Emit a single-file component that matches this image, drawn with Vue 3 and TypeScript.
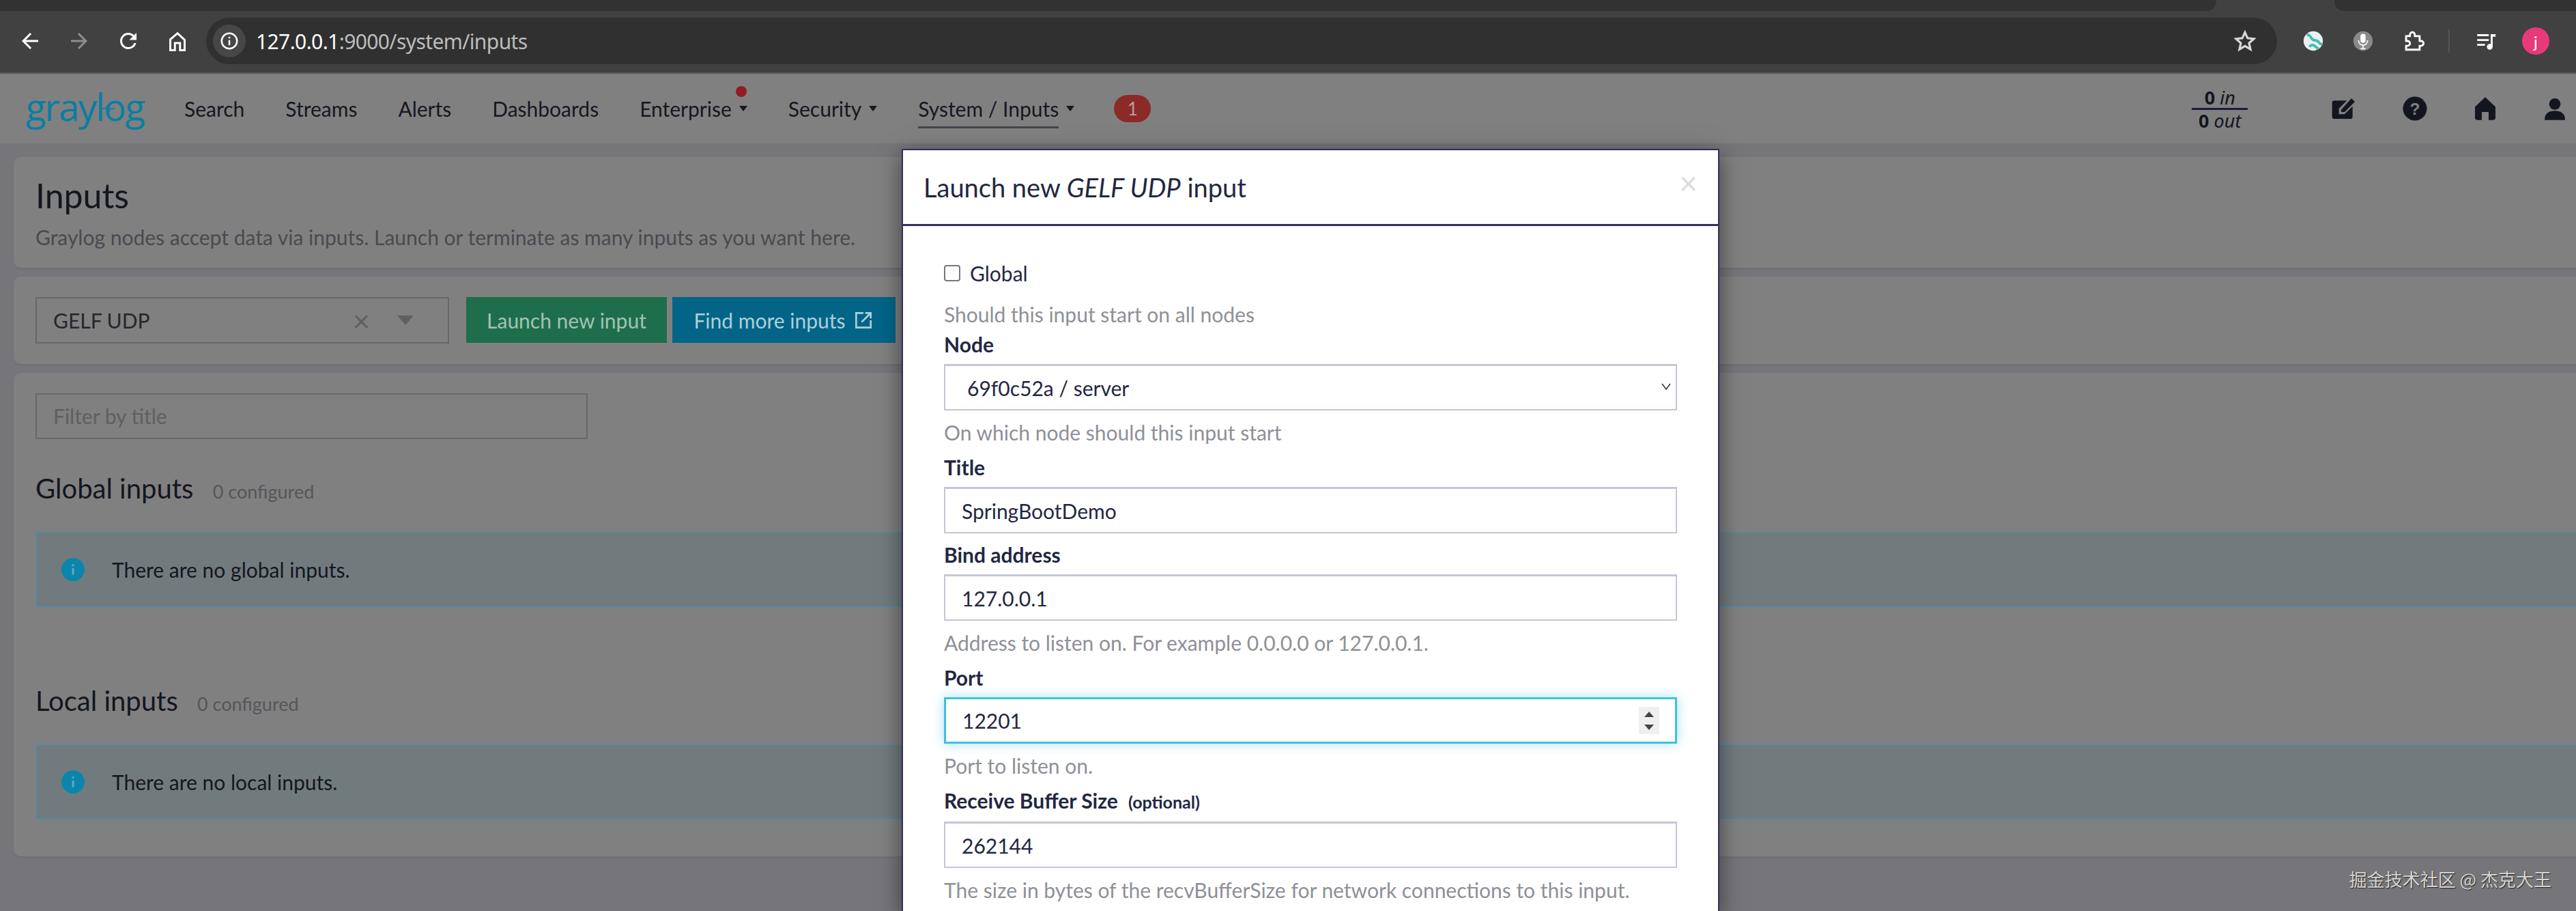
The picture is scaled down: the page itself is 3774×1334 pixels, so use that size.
<template>
  <div class="browser">
    <div class="tabstrip">
      <div class="tab-left" />
      <div class="tab-right" />
    </div>

    <div class="toolbar">
      <svg class="tb-icon" viewBox="0 0 24 24" fill="#fff"><path d="M20 11H7.8l5.6-5.6L12 4l-8 8 8 8 1.4-1.4L7.8 13H20z" /></svg>
      <svg class="tb-icon" viewBox="0 0 24 24" fill="#8e8e8e"><path d="M4 11h12.2l-5.6-5.6L12 4l8 8-8 8-1.4-1.4 5.6-5.6H4z" /></svg>
      <svg class="tb-icon" viewBox="0 0 24 24" fill="#fff"><path d="M17.65 6.35A8 8 0 1 0 19.73 14h-2.08A6 6 0 1 1 12 6c1.66 0 3.14.69 4.22 1.78L13 11h7V4z" /></svg>
      <svg class="tb-icon" viewBox="0 0 24 24" fill="none" stroke="#fff" stroke-width="2"><path d="M5 21V10.5L12 4.5l7 6.5V21h-4.5v-7h-5v7z" /></svg>

      <div class="omnibox">
        <span class="site-info">
          <svg viewBox="0 0 24 24" width="30" height="30" fill="none" stroke="#fff" stroke-width="2"><circle cx="12" cy="12" r="9" /><path d="M12 11v6M12 7v2" /></svg>
        </span>
        <span class="url"><b>127.0.0.1</b>:9000/system/inputs</span>
        <svg class="star" viewBox="0 0 24 24" fill="none" stroke="#d8d8d8" stroke-width="2"><path d="M12 4l2.4 5.4 5.8.6-4.4 3.9 1.3 5.8L12 16.7 6.900 19.700l1.300-5.800L3.800 10l5.800-.6z" /></svg>
      </div>

      <div class="extensions">
        <svg class="ext" viewBox="0 0 36 36"><circle cx="18" cy="18" r="15" fill="#eceff0" /><path d="M8 8c8 0 5 9 13 9s5 8 11 5M12 27c5-6 8-1 14 3" fill="none" stroke="#3dbdb5" stroke-width="4" /></svg>
        <svg class="ext" viewBox="0 0 36 36"><circle cx="18" cy="18" r="15" fill="#8a8a8a" /><rect x="14" y="7" width="8" height="14" rx="4" fill="#fff" /><path d="M11 17c0 10 14 10 14 0M18 24v6M14 30h8" fill="none" stroke="#fff" stroke-width="1.800" /></svg>
        <svg class="ext" viewBox="0 0 24 24" fill="none" stroke="#fff" stroke-width="2"><path d="M5 7h4V5.500a2.500 2.500 0 0 1 5 0V7h5v5h1.500a2.500 2.500 0 0 1 0 5H19v4H5v-4h1.500a2.500 2.500 0 0 0 0-5H5z" /></svg>
        <span class="tb-divider" />
        <svg class="ext queue" viewBox="0 0 24 24" fill="#fff"><path d="M3 5h12v2H3zM3 10h12v2H3zM3 15h8v2H3zM17 5h5v2.500h-3V18a3 3 0 1 1-2-2.800z" /></svg>
        <span class="avatar">j</span>
      </div>
    </div>

    <div class="viewport">
      <div class="page">
        <nav class="navbar">
          <div class="logo">
            graylog
            <svg class="logo-pulse" viewBox="0 0 20 12" fill="none" stroke="#0a7ea3" stroke-width="1.500"><path d="M1 6h5l2-4 3 8 2-4h6" /></svg>
          </div>
          <ul class="nav-items">
            <li v-for="item in navItems" :key="item.label" class="nav-item">
              <span :class="{ current: item.current }">{{ item.label }}</span>
              <i v-if="item.caret" class="caret" />
              <i v-if="item.dot" class="dot" />
            </li>
          </ul>
          <span class="badge">1</span>
          <div class="throughput">
            <div><b>0</b> <em>in</em></div>
            <div class="out"><b>0</b> <em>out</em></div>
          </div>
          <div class="nav-icons">
            <svg viewBox="0 0 24 24" width="40" height="40" fill="#14161f"><path d="M3 5h11l-7 7v5h5l7-7v9a2 2 0 0 1-2 2H3a2 2 0 0 1-2-2V7a2 2 0 0 1 2-2zM9 13l9-10 3 3-9 9H9z" /></svg>
            <svg viewBox="0 0 24 24" width="42" height="42"><circle cx="12" cy="12" r="10" fill="#14161f" /><text x="12" y="17" text-anchor="middle" font-size="14" font-weight="700" font-family="Liberation Sans, sans-serif" fill="#808080">?</text></svg>
            <svg viewBox="0 0 24 24" width="40" height="40" fill="#14161f"><path d="M12 2l9 8.500V20a2 2 0 0 1-2 2h-4v-7H9v7H5a2 2 0 0 1-2-2v-9.500z" /></svg>
            <svg viewBox="0 0 24 24" width="40" height="40" fill="#14161f"><circle cx="12" cy="8" r="5" /><path d="M3 22c0-6 4-8 9-8s9 2 9 8z" /></svg>
          </div>
        </nav>

        <section class="panel head-panel">
          <h1>Inputs</h1>
          <p class="lead">Graylog nodes accept data via inputs. Launch or terminate as many inputs as you want here.</p>
        </section>

        <section class="panel action-panel">
          <div class="type-select">
            <span>GELF UDP</span>
            <span class="clear">×</span>
            <i class="select-caret" />
          </div>
          <button class="btn btn-green">Launch new input</button>
          <button class="btn btn-blue">
            Find more inputs
            <svg viewBox="0 0 24 24" width="32" height="32" fill="none" stroke="currentColor" stroke-width="2"><path d="M12 4H4v16h16v-8M10 14L20 4M14 4h6v6" /></svg>
          </button>
        </section>

        <section class="panel list-panel">
          <div class="filter">Filter by title</div>
          <template v-for="block in inputBlocks" :key="block.title">
            <h2>{{ block.title }} <small>0 configured</small></h2>
            <div class="alert">
              <svg viewBox="0 0 24 24" width="34" height="34"><circle cx="12" cy="12" r="12" fill="#0a86ad" /><path d="M12 10.500v7M12 6.500v2" stroke="#6fa6b8" stroke-width="2" /></svg>
              <span>{{ block.empty }}</span>
            </div>
          </template>
        </section>
      </div>

      <div class="modal">
        <header class="modal-header">
          <h3>Launch new <em>GELF UDP</em> input</h3>
          <span class="close">×</span>
        </header>
        <div class="modal-body">
          <label class="check-row"><input type="checkbox" /> Global</label>
          <p class="help first">Should this input start on all nodes</p>

          <div class="field">
            <label>Node</label>
            <div class="control">
              <select><option>69f0c52a / server</option></select>
              <svg class="chevron" viewBox="0 0 16 12" fill="none" stroke="#333" stroke-width="1.500"><path d="M2 2l6 8 6-8" /></svg>
            </div>
            <p class="help">On which node should this input start</p>
          </div>

          <div class="field">
            <label>Title</label>
            <div class="control"><input type="text" value="SpringBootDemo" /></div>
          </div>

          <div class="field">
            <label>Bind address</label>
            <div class="control"><input type="text" value="127.0.0.1" /></div>
            <p class="help">Address to listen on. For example 0.0.0.0 or 127.0.0.1.</p>
          </div>

          <div class="field">
            <label>Port</label>
            <div class="control focused">
              <input type="text" value="12201" />
              <span class="spinner"><i class="up" /><i class="down" /></span>
            </div>
            <p class="help">Port to listen on.</p>
          </div>

          <div class="field">
            <label>Receive Buffer Size <small>(optional)</small></label>
            <div class="control"><input type="text" value="262144" /></div>
            <p class="help">The size in bytes of the recvBufferSize for network connections to this input.</p>
          </div>
        </div>
      </div>

      <div class="watermark">掘金技术社区 @ 杰克大王</div>
    </div>
  </div>
</template>

<script setup lang="ts">
interface NavItem {
  label: string
  caret?: boolean
  dot?: boolean
  current?: boolean
}

const navItems: NavItem[] = [
  { label: 'Search' },
  { label: 'Streams' },
  { label: 'Alerts' },
  { label: 'Dashboards' },
  { label: 'Enterprise', caret: true, dot: true },
  { label: 'Security', caret: true },
  { label: 'System / Inputs', caret: true, current: true },
]

const inputBlocks = [
  { title: 'Global inputs', empty: 'There are no global inputs.' },
  { title: 'Local inputs', empty: 'There are no local inputs.' },
]
</script>

<style>
html, body {
  margin: 0;
  background: #76767a;
}
</style>

<style scoped>
.browser {
  width: 3774px;
  height: 1334px;
  overflow: hidden;
  font-family: Lato, "Noto Sans", sans-serif;
  display: flex;
  flex-direction: column;
}

.tabstrip {
  height: 16px;
  background: #414141;
  display: flex;
  justify-content: space-between;
}
.tab-left {
  width: 3247px;
  background: #323232;
  border-radius: 0 0 14px 0;
}
.tab-right {
  width: 354px;
  background: #323232;
  border-radius: 0 0 0 14px;
}

.toolbar {
  height: 92px;
  background: #414141;
  border-bottom: 2px solid #5a5a5a;
  box-sizing: border-box;
  display: flex;
  align-items: center;
  padding: 0 0 2px 26px;
  flex-shrink: 0;
}
.tb-icon {
  width: 36px;
  height: 36px;
  margin-right: 36px;
}
.omnibox {
  width: 3034px;
  height: 68px;
  margin-left: -12px;
  border-radius: 34px;
  background: #303030;
  display: flex;
  align-items: center;
  padding-left: 10px;
  box-sizing: border-box;
}
.site-info {
  width: 48px;
  height: 48px;
  border-radius: 50%;
  background: #474747;
  display: flex;
  align-items: center;
  justify-content: center;
}
.url {
  margin-left: 15px;
  font: 30px "Noto Sans", sans-serif;
  letter-spacing: -0.6px;
  color: #bdbdbd;
}
.url b {
  font-weight: 400;
  color: #fff;
}
.star {
  width: 38px;
  height: 38px;
  margin-left: auto;
  margin-right: 28px;
}
.extensions {
  display: flex;
  align-items: center;
  margin-left: 36px;
}
.ext {
  width: 34px;
  height: 34px;
  margin-right: 39px;
}
.tb-divider {
  width: 2px;
  height: 34px;
  background: #555;
  margin-right: 36px;
  margin-left: -4px;
}
.queue {
  margin-right: 36px;
}
.avatar {
  width: 40px;
  height: 40px;
  border-radius: 50%;
  background: #e8397a;
  color: #fff;
  font-size: 24px;
  display: flex;
  align-items: center;
  justify-content: center;
}

.viewport {
  position: relative;
  flex: 1;
  overflow: hidden;
}
.page {
  width: 3900px;
  background: #76767a;
  height: 100%;
}

.navbar {
  height: 102px;
  background: #808080;
  display: flex;
  align-items: center;
  padding-left: 38px;
  color: #16171f;
}
.logo {
  position: relative;
  width: 162px;
  font-size: 55px;
  font-family: "Open Sans", sans-serif;
  letter-spacing: -2px;
  color: #0a7ea3;
  margin-top: -8px;
}
.logo-pulse {
  position: absolute;
  left: 111px;
  top: 34px;
  width: 20px;
  height: 14px;
}
.nav-items {
  list-style: none;
  display: flex;
  gap: 60px;
  margin: 0 0 0 70px;
  padding: 0;
  font-size: 30px;
}
.nav-item {
  position: relative;
  display: flex;
  align-items: center;
}
.current {
  border-bottom: 3px solid #45454b;
  padding-bottom: 8px;
  margin-bottom: -11px;
}
.caret {
  width: 0;
  height: 0;
  margin-left: 11px;
  border-left: 6px solid transparent;
  border-right: 6px solid transparent;
  border-top: 8px solid #16171f;
}
.dot {
  position: absolute;
  right: 1px;
  top: -15px;
  width: 16px;
  height: 16px;
  border-radius: 50%;
  background: #8f1d22;
}
.badge {
  width: 54px;
  height: 40px;
  margin-left: 58px;
  border-radius: 20px;
  background: #8c2a27;
  color: #b9a09f;
  font-size: 26px;
  display: flex;
  align-items: center;
  justify-content: center;
}
.throughput {
  margin-left: 1525px;
  width: 82px;
  font: 27px/31px "Noto Sans", sans-serif;
  text-align: center;
  color: #14161f;
}
.throughput b {
  font-weight: 700;
}
.throughput .out {
  border-top: 3px solid #1c1b3c;
}
.nav-icons {
  display: flex;
  align-items: center;
  gap: 62px;
  margin-left: 122px;
}

.panel {
  margin: 20px 0 0 20px;
  background: #808080;
  border-radius: 10px;
  box-shadow: 0 2px 3px rgba(0, 0, 0, 0.06);
}
.head-panel {
  height: 162px;
  padding: 22px 32px 0;
  box-sizing: border-box;
}
h1 {
  margin: 0;
  font-weight: 400;
  font-size: 50px;
  line-height: 68px;
  color: #14161f;
}
.lead {
  margin: 7px 0 0;
  font-size: 30px;
  line-height: 40px;
  color: #4a4a50;
}
.action-panel {
  margin-top: 13px;
  height: 128px;
  padding: 30px 32px 0;
  box-sizing: border-box;
  display: flex;
  align-items: flex-start;
  gap: 8px;
}
.type-select {
  width: 606px;
  height: 68px;
  box-sizing: border-box;
  border: 2px solid #67676e;
  display: flex;
  align-items: center;
  padding-left: 24px;
  margin-right: 17px;
  font-size: 30px;
  color: #25262c;
}
.clear {
  margin-left: auto;
  font-size: 44px;
  color: #5f6064;
}
.select-caret {
  width: 0;
  height: 0;
  margin: 0 50px 0 40px;
  border-left: 12px solid transparent;
  border-right: 12px solid transparent;
  border-top: 14px solid #5f6064;
}
.btn {
  height: 67px;
  border: 0;
  font-family: inherit;
  font-size: 30px;
  display: flex;
  align-items: center;
  justify-content: center;
}
.btn-green {
  width: 294px;
  background: #1e6e4c;
  color: #a3c3b3;
}
.btn-blue {
  width: 327px;
  gap: 10px;
  background: #026487;
  color: #adcfdb;
}
.list-panel {
  margin-top: 13px;
  height: 708px;
  padding: 30px 32px 0;
  box-sizing: border-box;
}
.filter {
  width: 809px;
  height: 67px;
  box-sizing: border-box;
  border: 2px solid #67676e;
  padding-left: 24px;
  font-size: 30px;
  line-height: 63px;
  color: #5e5f63;
}
h2 {
  margin: 47px 0 33px;
  font-weight: 400;
  font-size: 40px;
  line-height: 50px;
  color: #14161f;
}
h2 small {
  margin-left: 18px;
  font-size: 27px;
  color: #56565b;
}
.alert {
  height: 112px;
  box-sizing: border-box;
  border: 2px solid #5a8ba0;
  border-width: 2px 0 2px 2px;
  background: #717b7e;
  display: flex;
  align-items: center;
  gap: 40px;
  padding-left: 36px;
  font-size: 30px;
  color: #14161f;
}
.alert + h2 {
  margin-top: 111px;
}

.modal {
  position: absolute;
  left: 1321px;
  top: 110px;
  width: 1198px;
  box-sizing: border-box;
  background: #fff;
  border: 2px solid #342f5c;
  border-bottom: 0;
  box-shadow: 0 8px 30px rgba(0, 0, 0, 0.5);
  color: #232742;
}
.modal-header {
  height: 111px;
  box-sizing: border-box;
  border-bottom: 3px solid #342f5c;
  display: flex;
  align-items: center;
  justify-content: space-between;
  padding: 0 30px;
}
h3 {
  margin: 0;
  font-weight: 400;
  font-size: 38px;
}
.close {
  font-size: 46px;
  color: #dcdcdc;
  margin-top: -14px;
}
.modal-body {
  padding: 52px 60px 0;
}
.check-row {
  display: flex;
  align-items: center;
  gap: 14px;
  font-size: 30px;
  line-height: 34px;
}
.check-row input {
  appearance: none;
  width: 24px;
  height: 24px;
  margin: 0;
  box-sizing: border-box;
  border: 2px solid #77777c;
  border-radius: 4px;
}
.help {
  margin: 12px 0 7px;
  font-size: 30px;
  line-height: 40px;
  color: #8e9097;
}
.help.first {
  margin-top: 23px;
}
.field {
  margin-bottom: 14px;
}
.field > label {
  display: block;
  margin-bottom: 12px;
  font-size: 30px;
  line-height: 34px;
  font-weight: 700;
}
.field small {
  margin-left: 8px;
  font-size: 25px;
}
.control {
  position: relative;
  height: 68px;
}
.control input,
.control select {
  appearance: none;
  display: block;
  width: 100%;
  height: 100%;
  box-sizing: border-box;
  border: 2px solid #c6c5d9;
  border-top-width: 3px;
  border-radius: 0;
  background: #fff;
  padding: 0 24px;
  font: 30px Lato, "Noto Sans", sans-serif;
  color: #232742;
  outline: 0;
}
.control select {
  padding-left: 32px;
}
.chevron {
  position: absolute;
  right: 8px;
  top: 27px;
  width: 16px;
  height: 12px;
}
.focused input {
  border: 3px solid #3fc1de;
  box-shadow: 0 0 16px rgba(63, 193, 222, 0.45);
}
.spinner {
  position: absolute;
  right: 26px;
  top: 14px;
  width: 30px;
  height: 40px;
  background: #efefef;
  display: flex;
  flex-direction: column;
  align-items: center;
  justify-content: center;
  gap: 11px;
}
.spinner i {
  width: 0;
  height: 0;
  border-left: 7px solid transparent;
  border-right: 7px solid transparent;
}
.spinner .up {
  border-bottom: 8px solid #444;
}
.spinner .down {
  border-top: 8px solid #444;
}

.watermark {
  position: absolute;
  right: 36px;
  bottom: 29px;
  font: 26px "Noto Sans CJK SC", sans-serif;
  color: #d4d4d4;
  text-shadow: 1px 1px 1px #222;
}
</style>
